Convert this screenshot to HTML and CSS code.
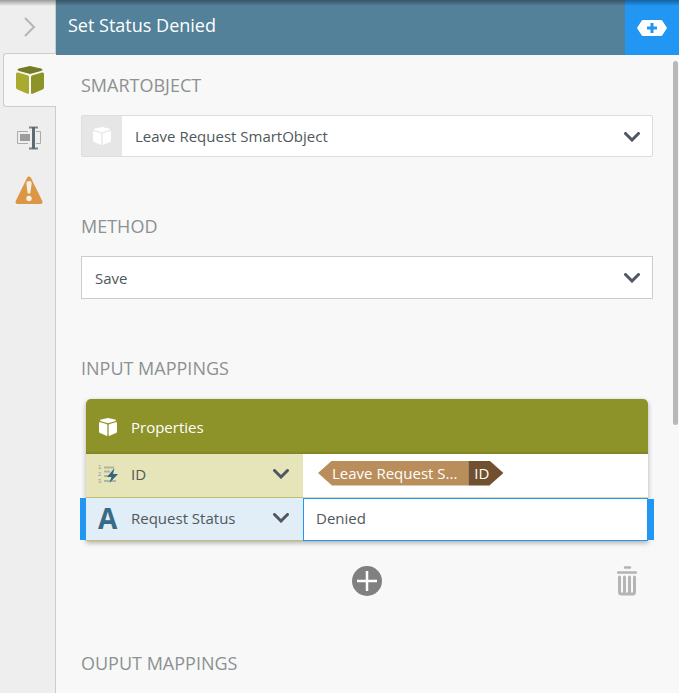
FILE: index.html
```html
<!DOCTYPE html>
<html lang="en">
<head>
<meta charset="utf-8">
<title>Set Status Denied</title>
<link rel="stylesheet" href="styles.css">
</head>
<body>
<svg class="defs" aria-hidden="true">
  <symbol id="cube" viewBox="0 0 28 28">
    <path class="cube-top" d="M14 0 L25 2.500 Q28 3.700 25 5 L14 8 L3 5 Q0 3.700 3 2.500 Z"/>
    <path class="cube-left" d="M0 8 Q0 6 2 6.500 L11.500 9.200 Q13 9.600 13 11 V26.500 Q13 28.300 11.500 27.800 L1.500 23.500 Q0 22.800 0 21.500 Z"/>
    <path class="cube-right" d="M28 8 Q28 6 26 6.500 L16.500 9.200 Q15 9.600 15 11 V26.500 Q15 28.300 16.500 27.800 L26.500 23.500 Q28 22.800 28 21.500 Z"/>
  </symbol>
  <symbol id="chevron" viewBox="0 0 16 10">
    <path d="M1.500 1.500 L8 8 L14.500 1.500" fill="none" stroke="#4f5664" stroke-width="3" stroke-linecap="round"/>
  </symbol>
</svg>
<div class="app">
  <nav class="rail" aria-label="Configuration">
    <button class="rail-item collapse" aria-label="Collapse">
      <svg width="12" height="20" viewBox="0 0 12 20"><path d="M1 1 L10 10 L1 19" fill="none" stroke="#b5b5b5" stroke-width="2"/></svg>
    </button>
    <button class="rail-item active" aria-label="SmartObject">
      <svg class="cube-green" width="28" height="28"><use href="#cube"/></svg>
    </button>
    <button class="rail-item" aria-label="Rename">
      <svg width="24" height="24" viewBox="0 0 24 24">
        <path d="M11 5.500 H.5 V17.500 H11 M19 5.500 H23.500 V17.500 H19" fill="none" stroke="#aaa"/>
        <path d="M3 8 H13 V15 H3 Z" fill="#9c9c9c"/>
        <path d="M12 1.500 H21 M12 22.500 H21" stroke="#7b8587" stroke-width="2"/><path d="M16.500 1 V23" stroke="#5b6b71" stroke-width="3"/>
      </svg>
    </button>
    <button class="rail-item" aria-label="Warnings">
      <svg width="28" height="28" viewBox="0 0 28 28">
        <path d="M14 2.500 L25.500 26 H2.500 Z" fill="#dd9744" stroke="#dd9744" stroke-width="4" stroke-linejoin="round"/>
        <path d="M11.300 7 Q11.300 5 14 5 Q16.700 5 16.700 7 L15.400 17 Q14 18.500 12.600 17 Z" fill="#f4efe7"/>
        <circle cx="14" cy="22.500" r="2.700" fill="#f4efe7"/>
      </svg>
    </button>
  </nav>
  <div class="panel">
    <header class="title-bar">
      <h1>Set Status Denied</h1>
      <button class="add-context" aria-label="Open context browser">
        <svg width="30" height="16" viewBox="0 0 30 16"><path d="M6 0 H24 Q25 0 25.500 1 L30 8 L25.500 15 Q25 16 24 16 H6 Q5 16 4.500 15 L0 8 L4.500 1 Q5 0 6 0 Z" fill="#fff"/><path d="M15 3 V13 M10 8 H20" stroke="#2196f3" stroke-width="3"/></svg>
      </button>
    </header>
    <main class="content">
      <section class="group">
        <label class="heading" for="object">SMARTOBJECT</label>
        <div class="field soft">
          <span class="prefix"><svg width="18" height="18"><use href="#cube"/></svg></span>
          <select id="object"><option>Leave Request SmartObject</option></select>
          <svg class="arrow" width="16" height="10"><use href="#chevron"/></svg>
        </div>
      </section>
      <section class="group">
        <label class="heading" for="method">METHOD</label>
        <div class="field">
          <select id="method"><option>Save</option></select>
          <svg class="arrow" width="16" height="10"><use href="#chevron"/></svg>
        </div>
      </section>
      <section class="group">
        <h2 class="heading">INPUT MAPPINGS</h2>
        <table class="mappings">
          <thead>
            <tr><th colspan="2"><div class="cell"><svg width="20" height="18"><use href="#cube"/></svg>Properties</div></th></tr>
          </thead>
          <tbody>
            <tr>
              <th class="property" scope="row"><div class="cell">
                <svg width="20" height="22" viewBox="0 -1 20 22">
                  <g class="digits"><text x="0" y="5">1</text><text x="0" y="12">2</text><text x="0" y="19">3</text></g>
                  <path d="M6 3.500 H16 M6 7.500 H12 M6 12 H11 M6 17 H18" fill="none" stroke="#b2b3a5" stroke-width="2"/>
                  <path d="M16.500 4 L9 13 H13.500 L11.500 19 L20 10 H15 Z" fill="#326780"/>
                </svg>
                <span class="name">ID</span>
                <button class="menu" aria-label="ID options"><svg width="16" height="10"><use href="#chevron"/></svg></button>
              </div></th>
              <td class="value"><div class="token"><span class="source">Leave Request S...</span><span class="key">ID</span></div></td>
            </tr>
            <tr class="selected">
              <th class="property" scope="row"><div class="cell">
                <span class="text-type" aria-hidden="true">A</span>
                <label class="name" for="status">Request Status</label>
                <button class="menu" aria-label="Request Status options"><svg width="16" height="10"><use href="#chevron"/></svg></button>
              </div></th>
              <td class="value"><input id="status" type="text" value="Denied"></td>
            </tr>
          </tbody>
        </table>
        <div class="actions">
          <button class="add" aria-label="Add mapping"><svg width="30" height="30" viewBox="0 0 30 30"><circle cx="15" cy="15" r="15" fill="#808080"/><path d="M15 5 V25 M5 15 H25" stroke="#fff" stroke-width="2.500"/></svg></button>
          <button class="remove" aria-label="Delete mapping"><svg width="20" height="30" viewBox="0 0 20 30"><path d="M8 1.500 H13 M1 6.500 H19" fill="none" stroke="#b3b3b3" stroke-width="2.500" stroke-linecap="round"/><path d="M2.500 11 V26 Q2.500 28 4.500 28 H15.500 Q17.500 28 17.500 26 V11 M7.500 11 V27 M12.500 11 V27" fill="none" stroke="#b5b5b5" stroke-width="3" stroke-linecap="round"/></svg></button>
        </div>
      </section>
      <section class="group">
        <h2 class="heading">OUPUT MAPPINGS</h2>
      </section>
      <div class="scroll-thumb"></div>
    </main>
  </div>
</div>
</body>
</html>
```
FILE: styles.css
```css
* {
  box-sizing: border-box;
}

body {
  margin: 0;
  font: 15px/20px "Open Sans", sans-serif;
  color: #50585a;
  background: #f8f8f8;
}

button,
select,
input {
  font: inherit;
  color: inherit;
  border: 0;
  margin: 0;
  padding: 0;
  background: none;
  border-radius: 0;
}

svg {
  display: block;
  flex: none;
  fill: #fff;
}

.defs {
  position: absolute;
  width: 0;
  height: 0;
}

.app {
  display: grid;
  grid-template-columns: 56px minmax(0, 1fr);
  height: 100vh;
  overflow: hidden;
  position: relative;
}

.app::before {
  content: "";
  position: absolute;
  inset: 0 0 auto;
  height: 6px;
  background: linear-gradient(rgba(0, 0, 0, 0.35), transparent);
  pointer-events: none;
  z-index: 1;
}

.rail {
  display: flex;
  flex-direction: column;
  background: #eee;
  box-shadow: inset -1px 0 #ccc;
}

.rail-item {
  display: grid;
  place-items: center;
  flex: none;
  height: 52px;
  margin-left: 3px;
  padding-right: 2px;
}

.rail-item.collapse {
  height: 53px;
  padding-right: 0;
}

.rail-item.active {
  height: 54px;
  margin-bottom: 5px;
  padding-right: 0;
  background: #f8f8f8;
  border: 1px solid #ccc;
  border-right: 0;
  border-radius: 4px 0 0 4px;
}

.cube-top {
  fill: var(--cube-top, #fff);
}

.cube-left {
  fill: var(--cube-left, #fff);
}

.cube-right {
  fill: var(--cube-right, #fff);
}

.cube-green {
  --cube-top: #737b25;
  --cube-left: #a9ab2f;
  --cube-right: #8d9329;
}

.panel {
  display: flex;
  flex-direction: column;
  min-height: 0;
}

.title-bar {
  display: flex;
  justify-content: space-between;
  height: 55px;
  flex: none;
  background: #53819a;
  color: #fff;
}

h1 {
  margin: 0;
  padding: 13px 12px;
  font-size: 18px;
  line-height: 24px;
  font-weight: 400;
}

.add-context {
  display: grid;
  place-items: center;
  width: 54px;
  background: #2196f3;
}

.content {
  position: relative;
  flex: 1;
  display: flex;
  flex-direction: column;
  gap: 57px;
  padding: 18px 26px 0 25px;
  overflow: hidden;
}

.group {
  display: flex;
  flex-direction: column;
  gap: 18px;
}

.heading {
  margin: 0;
  font-size: 18px;
  line-height: 24px;
  font-weight: 400;
  color: #8c9191;
}

.field {
  position: relative;
  display: flex;
  height: 43px;
  background: #fff;
  border: 1px solid #ccc;
}

.soft {
  height: 42px;
  border-color: #dcdcdc;
  border-radius: 2px;
}

.prefix {
  display: grid;
  place-items: center;
  width: 40px;
  background: #e6e6e6;
}

select {
  appearance: none;
  flex: 1;
  min-width: 0;
  padding: 0 40px 0 13px;
}

.arrow {
  position: absolute;
  right: 12px;
  top: 16px;
  pointer-events: none;
}

.mappings {
  margin: 1px 5px 0;
  border-spacing: 0;
  table-layout: fixed;
  border-radius: 5px 5px 0 0;
  box-shadow: 0 2px 5px rgba(0, 0, 0, 0.3);
}

.mappings th,
.mappings td {
  padding: 0;
  font-weight: 400;
  text-align: left;
}

.mappings thead th {
  height: 55px;
  padding-top: 1px;
  color: #fff;
  font-weight: 500;
  background: linear-gradient(transparent 52px, #7c8123), #8d9329;
  border-radius: 5px 5px 0 0;
}

.cell {
  display: flex;
  align-items: center;
  gap: 13px;
  padding: 0 12px;
}

.mappings .property {
  width: 217px;
  height: 44px;
  padding-bottom: 3px;
  background: #e6e5b9;
  border-bottom: 1px solid #bdbf72;
}

.mappings .selected .property {
  height: 43px;
}

.digits {
  font-family: "Liberation Sans", sans-serif;
  font-size: 6px;
  fill: #96978c;
}

.text-type {
  width: 20px;
  font-size: 28px;
  font-weight: 700;
  color: #386b87;
}

.name {
  flex: 1;
}

.menu {
  padding: 4px 2px;
}

.mappings .value {
  padding-bottom: 5px;
  background: #fff;
  border-bottom: 1px solid #dcdcae;
}

.token {
  display: flex;
  height: 25px;
  margin-left: 15px;
  line-height: 24px;
  font-weight: 500;
  color: #fff;
}

.source {
  padding: 0 11px 0 14px;
  background: #b98e5a;
  clip-path: polygon(14px 0, 100% 0, 100% 100%, 14px 100%, 0 50%);
}

.key {
  padding: 0 14px 0 6px;
  background: #71502f;
  clip-path: polygon(0 0, calc(100% - 14px) 0, 100% 50%, calc(100% - 14px) 100%, 0 100%);
}

.selected .property {
  position: relative;
}

.mappings .selected .property {
  background: #e1edf7;
}

.selected .property::before {
  content: "";
  position: absolute;
  inset: 0 100% 0 auto;
  width: 6px;
  background: #2196f3;
}

.mappings .selected .value {
  position: relative;
  padding: 0;
  border: 1px solid #2196f3;
}

.selected .value::after {
  content: "";
  position: absolute;
  inset: 0 auto 0 100%;
  width: 7px;
  background: #2196f3;
}

input {
  display: block;
  width: 100%;
  height: 41px;
  padding: 0 12px 3px;
  outline: 0;
}

.actions {
  display: grid;
  grid-template-columns: 1fr auto 1fr;
  height: 28px;
  margin-top: 7px;
  padding: 0 16px;
}

.add {
  grid-column: 2;
}

.remove {
  justify-self: end;
}

.scroll-thumb {
  position: absolute;
  top: 6px;
  right: 1px;
  width: 5px;
  height: 57%;
  border-radius: 3px;
  background: #b8b8b8;
}
```
